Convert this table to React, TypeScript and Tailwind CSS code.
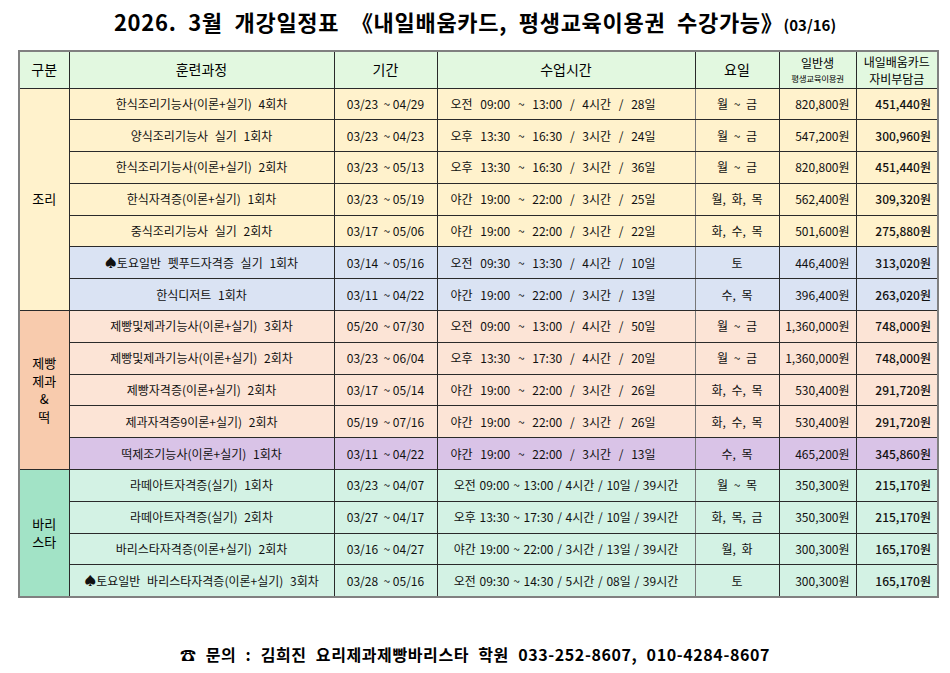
import React from 'react';

type Row = {
  name: string;
  period: string;
  time: string;
  days: string;
  price: string;
  self: string;
  bg: string;
};

const YELLOW = 'bg-[#fff2cc]';
const BLUE = 'bg-[#dae3f3]';
const PEACH = 'bg-[#fce4d6]';
const PURPLE = 'bg-[#d9c3e7]';
const MINT = 'bg-[#d3f2e4]';

const rows: Row[] = [
  { name: '한식조리기능사(이론+실기) 4회차', period: '03/23  ~ 04/29', time: '오전 09:00 ~ 13:00 / 4시간 / 28일', days: '월 ~ 금', price: '820,800원', self: '451,440원', bg: YELLOW },
  { name: '양식조리기능사 실기 1회차', period: '03/23  ~ 04/23', time: '오후 13:30 ~ 16:30 / 3시간 / 24일', days: '월 ~ 금', price: '547,200원', self: '300,960원', bg: YELLOW },
  { name: '한식조리기능사(이론+실기) 2회차', period: '03/23  ~ 05/13', time: '오후 13:30 ~ 16:30 / 3시간 / 36일', days: '월 ~ 금', price: '820,800원', self: '451,440원', bg: YELLOW },
  { name: '한식자격증(이론+실기) 1회차', period: '03/23  ~ 05/19', time: '야간 19:00 ~ 22:00 / 3시간 / 25일', days: '월, 화, 목', price: '562,400원', self: '309,320원', bg: YELLOW },
  { name: '중식조리기능사 실기 2회차', period: '03/17  ~ 05/06', time: '야간 19:00 ~ 22:00 / 3시간 / 22일', days: '화, 수, 목', price: '501,600원', self: '275,880원', bg: YELLOW },
  { name: '♠토요일반 펫푸드자격증 실기 1회차', period: '03/14  ~ 05/16', time: '오전 09:30 ~ 13:30 / 4시간 / 10일', days: '토', price: '446,400원', self: '313,020원', bg: BLUE },
  { name: '한식디저트 1회차', period: '03/11  ~ 04/22', time: '야간 19:00 ~ 22:00 / 3시간 / 13일', days: '수, 목', price: '396,400원', self: '263,020원', bg: BLUE },
  { name: '제빵및제과기능사(이론+실기) 3회차', period: '05/20  ~ 07/30', time: '오전 09:00 ~ 13:00 / 4시간 / 50일', days: '월 ~ 금', price: '1,360,000원', self: '748,000원', bg: PEACH },
  { name: '제빵및제과기능사(이론+실기) 2회차', period: '03/23  ~ 06/04', time: '오후 13:30 ~ 17:30 / 4시간 / 20일', days: '월 ~ 금', price: '1,360,000원', self: '748,000원', bg: PEACH },
  { name: '제빵자격증(이론+실기) 2회차', period: '03/17  ~ 05/14', time: '야간 19:00 ~ 22:00 / 3시간 / 26일', days: '화, 수, 목', price: '530,400원', self: '291,720원', bg: PEACH },
  { name: '제과자격증9이론+실기) 2회차', period: '05/19  ~ 07/16', time: '야간 19:00 ~ 22:00 / 3시간 / 26일', days: '화, 수, 목', price: '530,400원', self: '291,720원', bg: PEACH },
  { name: '떡제조기능사(이론+실기) 1회차', period: '03/11  ~ 04/22', time: '야간 19:00 ~ 22:00 / 3시간 / 13일', days: '수, 목', price: '465,200원', self: '345,860원', bg: PURPLE },
  { name: '라떼아트자격증(실기) 1회차', period: '03/23  ~ 04/07', time: '오전 09:00 ~ 13:00 / 4시간 / 10일 / 39시간', days: '월 ~ 목', price: '350,300원', self: '215,170원', bg: MINT },
  { name: '라떼아트자격증(실기) 2회차', period: '03/27  ~ 04/17', time: '오후 13:30 ~ 17:30 / 4시간 / 10일 / 39시간', days: '화, 목, 금', price: '350,300원', self: '215,170원', bg: MINT },
  { name: '바리스타자격증(이론+실기) 2회차', period: '03/16  ~ 04/27', time: '야간 19:00 ~ 22:00 / 3시간 / 13일 / 39시간', days: '월, 화', price: '300,300원', self: '165,170원', bg: MINT },
  { name: '♠토요일반 바리스타자격증(이론+실기) 3회차', period: '03/28  ~ 05/16', time: '오전 09:30 ~ 14:30 / 5시간 / 08일 / 39시간', days: '토', price: '300,300원', self: '165,170원', bg: MINT },
];

const groups: Record<number, { span: number; label: string[]; bg: string }> = {
  0: { span: 7, label: ['조리'], bg: 'bg-[#fff2cc]' },
  7: { span: 5, label: ['제빵', '제과', '&', '떡'], bg: 'bg-[#f8cbad]' },
  12: { span: 4, label: ['바리', '스타'], bg: 'bg-[#a2e3c6]' },
};

const cell = 'border border-[#2a2a2a] h-[31.8px] p-0 text-[12px] text-[#111]';

export default function App() {
  return (
    <div
      className="w-[950px] h-[673px] bg-white text-black"
      style={{ fontFamily: '"Noto Sans CJK KR", "Noto Sans", sans-serif' }}
    >
      <h1 className="pt-[7px] text-center text-[22px] leading-[28px] font-bold tracking-[0.7px] [word-spacing:6px]">
        2026. 3월 개강일정표 《내일배움카드, 평생교육이용권 수강가능》<span className="text-[15px] tracking-normal">(03/16)</span>
      </h1>

      <table className="ml-[18px] mt-[11px] w-[919px] table-fixed border-collapse border-2 border-[#808080]">
        <colgroup>
          <col className="w-[50px]" />
          <col className="w-[265px]" />
          <col className="w-[103px]" />
          <col className="w-[258px]" />
          <col className="w-[84px]" />
          <col className="w-[77px]" />
          <col className="w-[82px]" />
        </colgroup>
        <thead>
          <tr className="bg-[#e2f8e0] h-[37px]">
            <th className="border border-[#2a2a2a] text-[14px] font-normal">구분</th>
            <th className="border border-[#2a2a2a] text-[14px] font-normal">훈련과정</th>
            <th className="border border-[#2a2a2a] text-[14px] font-normal">기간</th>
            <th className="border border-[#2a2a2a] text-[14px] font-normal">수업시간</th>
            <th className="border border-[#2a2a2a] text-[14px] font-normal">요일</th>
            <th className="border border-[#2a2a2a] font-normal leading-none">
              <div className="text-[12px] leading-[14px]">일반생</div>
              <div className="text-[8.5px] leading-[10px] mt-[3px] tracking-[-0.3px]">평생교육이용권</div>
            </th>
            <th className="border border-[#2a2a2a] font-normal text-[12px] leading-[17px]">
              <div>내일배움카드</div>
              <div>자비부담금</div>
            </th>
          </tr>
        </thead>
        <tbody>
          {rows.map((r, i) => {
            const g = groups[i];
            const long = i >= 12;
            return (
              <tr key={i} className={r.bg}>
                {g && (
                  <td
                    rowSpan={g.span}
                    className={`${g.bg} border border-[#2a2a2a] text-center text-[13px] leading-[18px]`}
                  >
                    {g.label.map((l) => (
                      <div key={l}>{l}</div>
                    ))}
                  </td>
                )}
                <td className={`${cell} text-center [word-spacing:4px]`}>{r.name}</td>
                <td className={`${cell} text-center whitespace-pre`}>{r.period}</td>
                <td
                  className={`${cell} text-center whitespace-nowrap border-l-[#777] border-r-[#777] ${
                    long ? '[word-spacing:1px]' : 'pr-[26px] [word-spacing:5px]'
                  }`}
                >
                  {r.time}
                </td>
                <td className={`${cell} text-center [word-spacing:3px]`}>{r.days}</td>
                <td className={`${cell} text-right pr-[6px]`}>{r.price}</td>
                <td className={`${cell} text-right pr-[6px] font-medium`}>{r.self}</td>
              </tr>
            );
          })}
        </tbody>
      </table>

      <div className="mt-[45px] text-center text-[16px] font-bold leading-[22px] tracking-[0.6px] [word-spacing:5px]">
        ☎ 문의 : 김희진 요리제과제빵바리스타 학원 033-252-8607, 010-4284-8607
      </div>
    </div>
  );
}
